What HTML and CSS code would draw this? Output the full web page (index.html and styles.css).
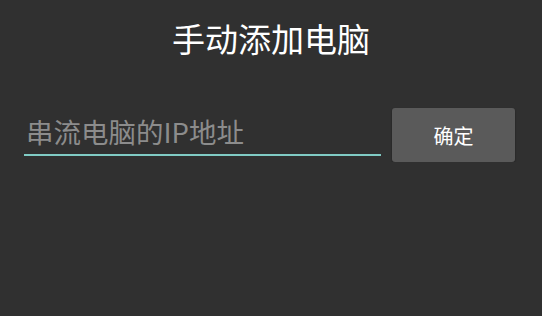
FILE: index.html
```html
<!DOCTYPE html>
<html lang="zh">
<head>
<meta name="viewport" content="width=device-width, initial-scale=1">
<title>手动添加电脑</title>
<link rel="stylesheet" href="styles.css">
</head>
<body>
<h1 class="title">手动添加电脑</h1>

<div class="add-row">
  <div class="field">
    <input type="text" class="host-input" placeholder="串流电脑的IP地址">
  </div>
  <button type="button" class="ok-button">确定</button>
</div>
</body>
</html>
```

FILE: styles.css
```css
body {
  margin: 0;
  background-color: #303030;
  color: white;
  font-family: "Noto Sans CJK SC", "Noto Sans", sans-serif;
}
.title {
  margin: 0;
  padding-top: 15px;
  text-align: center;
  font-size: 33px;
  font-weight: normal;
  line-height: 46px;
}
.add-row {
  display: flex;
  align-items: flex-start;
  padding: 47px 27px 0 24px;
  gap: 11px;
}
.field {
  flex: 1;
}
.host-input {
  display: block;
  width: 100%;
  box-sizing: border-box;
  background: transparent;
  border: none;
  border-bottom: 2px solid #80cbc4;
  color: white;
  font-family: inherit;
  font-size: 27.5px;
  padding: 0 0 3px 2px;
  margin-top: 2px;
  height: 46px;
  outline: none;
}
.host-input::placeholder {
  color: #8c8c8c;
}
.ok-button {
  width: 123px;
  height: 54px;
  background-color: #5a5a5a;
  border: none;
  border-radius: 3px;
  color: white;
  font-family: inherit;
  font-size: 20px;
  box-shadow: 0 1px 2px rgba(0, 0, 0, 0.4);
}
```
